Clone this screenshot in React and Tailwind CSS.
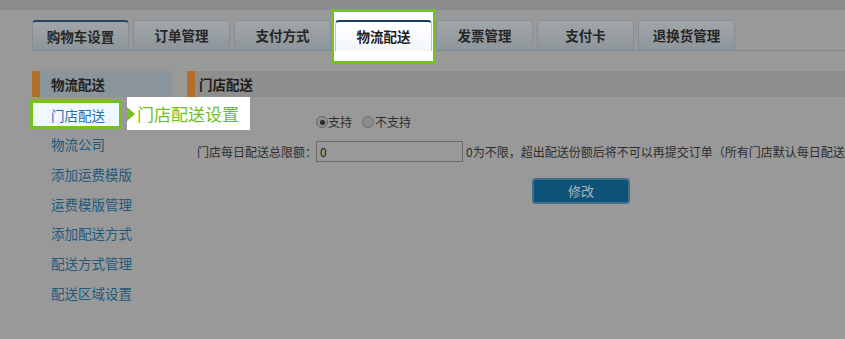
import React from 'react';

const tabs = ['购物车设置', '订单管理', '支付方式', '物流配送', '发票管理', '支付卡', '退换货管理'];
const menu = ['物流公司', '添加运费模版', '运费模版管理', '添加配送方式', '配送方式管理', '配送区域设置'];

export default function App() {
  return (
    <div className="relative w-[845px] h-[339px] overflow-hidden bg-[#999999] text-[#2a2a2a] font-['Noto_Sans_CJK_SC',sans-serif]">
      {/* top strip */}
      <div className="h-[10px] bg-[#8b8b8b]" />

      {/* Tabs */}
      <div className="mt-[11px] ml-[32px] flex gap-[4px] border-b border-[#7e8890] h-[30px] items-end">
        {tabs.map((tab) => {
          if (tab === '物流配送') {
            return (
              <div key={tab} className="relative w-[97px] h-[31px] -mb-px">
                {/* highlight frame */}
                <div className="absolute left-[-4px] right-[-4px] top-[-11px] bottom-[-13px] border-[3px] border-[#74c11f] bg-white" />
                <div className="relative h-full flex items-center justify-center rounded-t-[4px] border-x border-t-2 border-x-[#b9c6d1] border-t-[#1b3a5e] bg-gradient-to-b from-white to-[#f2f6fa] text-[13.5px] font-bold text-[#1e1e1e]">
                  {tab}
                </div>
              </div>
            );
          }
          return (
            <div
              key={tab}
              className={`w-[97px] h-[30px] flex items-center justify-center rounded-t-[4px] border-x border-t border-[#858f96] bg-gradient-to-b from-[#a1a5a8] to-[#8e969b] text-[13.5px] font-bold text-[#262626] ${
                tab === '购物车设置' ? 'border-t-2 border-t-[#2b4560]' : ''
              }`}
            >
              {tab}
            </div>
          );
        })}
      </div>

      {/* Body */}
      <div className="mt-[20px] ml-[32px] flex">
        {/* Sidebar */}
        <div className="w-[140px] shrink-0">
          <div className="h-[26px] flex items-center border-l-[8px] border-[#b06f2a] bg-[#8b969c] pl-[11px] text-[13.5px] font-bold text-[#222]">
            物流配送
          </div>
          <div className="mt-[3px]">
            <div className="relative h-[29.7px]">
              <div className="absolute left-[-2px] top-0 w-[92px] h-[29px] border-[3px] border-[#74c11f] bg-[#eef8fd]" />
              <div className="relative h-full flex items-center pl-[19px] text-[13.5px] text-[#2470a8]">门店配送</div>
              {/* callout */}
              <div className="absolute left-[95px] top-[-3px] w-[123px] h-[33px] bg-white flex items-center z-10">
                <div className="w-0 h-0 border-y-[7px] border-y-transparent border-l-[8px] border-l-[#74c11f]" />
                <span className="ml-[2px] text-[17px] text-[#6fbf22] whitespace-nowrap">门店配送设置</span>
              </div>
            </div>
            {menu.map((item) => (
              <div key={item} className="h-[29.7px] flex items-center pl-[19px] text-[13.5px] text-[#215a7c]">
                {item}
              </div>
            ))}
          </div>
        </div>

        {/* Content */}
        <div className="ml-[15px] flex-1">
          <div className="h-[26px] flex items-center border-l-[8px] border-[#b06f2a] bg-[#8e8e8e] pl-[4px] text-[13.5px] font-bold text-[#1c1c1c]">
            门店配送
          </div>

          <div className="mt-[15px] flex items-center h-[20px] text-[12px] text-[#2e2e2e]">
            <div className="w-[129px] shrink-0" />
            <label className="flex items-center">
              <span className="w-[12px] h-[12px] rounded-full border border-[#666] bg-[#8f8f8f] flex items-center justify-center">
                <span className="w-[5px] h-[5px] rounded-full bg-[#2a2a2a]" />
              </span>
              <span>支持</span>
            </label>
            <label className="ml-[10px] flex items-center">
              <span className="w-[12px] h-[12px] rounded-full border border-[#6e6e6e] bg-[#8c8c8c]" />
              <span className="ml-[1px]">不支持</span>
            </label>
          </div>

          <div className="mt-[9px] flex items-center h-[21px] text-[12px] text-[#2e2e2e] whitespace-nowrap">
            <div className="w-[129px] shrink-0 pl-[10px]">门店每日配送总限额：</div>
            <div className="w-[147px] h-[21px] border border-[#6a6a6a] bg-[#999] pl-[3px] flex items-center text-[#1a1a1a]">0</div>
            <span className="ml-[3px]">0为不限，超出配送份额后将不可以再提交订单（所有门店默认每日配送总限额）</span>
          </div>

          <div className="mt-[15px] ml-[345px]">
            <button className="w-[98px] h-[26px] rounded-[4px] border-2 border-[#3f6d8a] bg-[#0f5277] text-[13px] text-[#a9b7bf]">
              修改
            </button>
          </div>
        </div>
      </div>
    </div>
  );
}
